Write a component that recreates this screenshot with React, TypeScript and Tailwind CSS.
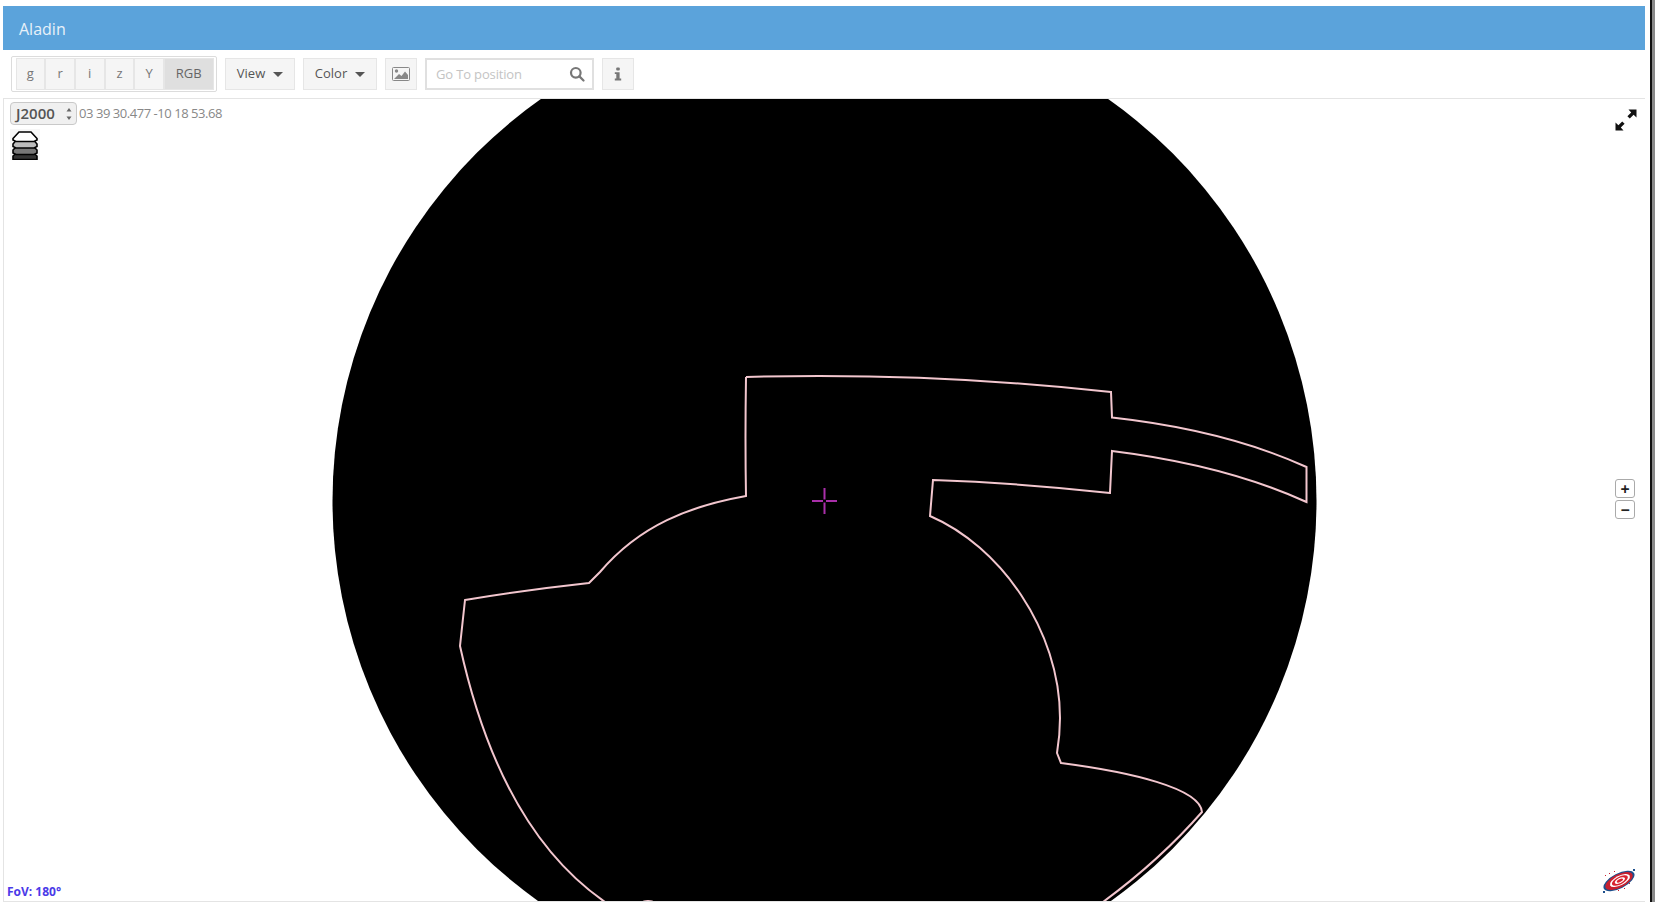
import React from "react";

const font = { fontFamily: '"Open Sans", sans-serif' };

const bands = ["g", "r", "i", "z", "Y"];

const ToolButton = ({ className, children }: { className: string; children: React.ReactNode }) => (
  <div className={`flex h-[32px] items-center justify-center border border-[#e6e6e6] bg-[#f5f5f5] text-[13px] text-[#555] ${className}`}>
    {children}
  </div>
);

const Caret = () => <span className="ml-[8px] h-0 w-0 border-x-[5px] border-t-[5px] border-x-transparent border-t-[#555]" />;

const Sky = () => (
  <svg className="absolute left-[-4px] top-[-99px]" width="1655" height="902" viewBox="0 0 1655 902">
    <circle cx="824.5" cy="501" r="492" fill="#000" />
    <path
      d="M746 377Q930 372 1111 392L1112 417.5Q1225 430 1306.5 467L1306.5 502Q1225 465 1112 451L1110 493Q1020 483 933 480L930 516C1000 546 1060 630 1060 718Q1060 735 1057 753L1061 763C1130 772 1200 788 1202 812Q1160 860 1103 902M605 902C530 850 485 760 460 646L465 600Q525 590 589 583L600 572C640 525 690 506 746 496Q745 440 746 377"
      fill="none"
      stroke="#f2c6ce"
      strokeWidth="2"
    />
    <ellipse cx="648" cy="902" rx="6" ry="2" fill="#f2c6ce" />
    <path d="M812 501H823M826 501H837M824.5 488V499.5M824.5 502.5V514" stroke="#a92fa9" strokeWidth="2" />
  </svg>
);

const StackIcon = () => (
  <svg width="30" height="31" viewBox="0 0 30 31" className="bg-[#f7f7f7]">
    <path d="M3 27L6 24.5H24L27 27V30.5H3Z" fill="#333" stroke="#000" strokeWidth="1.6" />
    <path d="M3 21L6 18H24L27 21V24L24 25.5H6L3 24Z" fill="#777" stroke="#000" strokeWidth="1.6" />
    <path d="M3 15L6 11.5H24L27 15V17.5L24 19H6L3 17.5Z" fill="#bbb" stroke="#000" strokeWidth="1.6" />
    <path d="M3 9.5L9 3H21L27 9.5V11L24 12.5H6L3 11Z" fill="#fff" stroke="#000" strokeWidth="1.6" />
  </svg>
);

const GalaxyLogo = () => (
  <svg width="34" height="26" viewBox="0 0 34 26">
    <g transform="rotate(-27 17 13)">
      <ellipse cx="17" cy="13" rx="17" ry="7.5" fill="#1d4f8c" />
      <ellipse cx="17" cy="13" rx="15" ry="6.6" fill="#c8202f" />
      <ellipse cx="18" cy="13" rx="11" ry="4.8" fill="#fff" />
      <ellipse cx="18" cy="13" rx="8.8" ry="3.8" fill="#d8232f" />
      <ellipse cx="18" cy="13" rx="5.6" ry="2.5" fill="#fff" />
      <ellipse cx="18" cy="13" rx="3.4" ry="1.4" fill="#d8232f" />
    </g>
    <g fill="#c8202f">
      <rect x="3" y="7" width="1" height="1" />
      <rect x="7" y="5" width="1" height="1" />
      <rect x="12" y="3" width="1" height="1" />
      <rect x="27" y="15" width="1" height="1" />
      <rect x="22" y="20" width="1" height="1" />
      <rect x="16" y="22" width="1" height="1" />
    </g>
    <rect x="31" y="1" width="2" height="2" fill="#1d4f8c" />
    <rect x="1" y="23" width="2" height="2" fill="#1d4f8c" />
  </svg>
);

export default function App() {
  return (
    <div className="relative h-[902px] w-[1655px] overflow-hidden bg-white" style={font}>
      <div className="flex h-[902px] w-[1650px] flex-col pl-[3px] pr-[5px] pt-[6px]">
        <div className="flex h-[44px] shrink-0 items-center bg-[#5ba3db] pl-[16px] pt-[2px] text-[16px] text-[#e8f1f9]">Aladin</div>

        <div className="flex h-[48px] shrink-0 items-center pl-[8px]">
          <div className="flex h-[36px] w-[206px] items-center rounded-[2px] border border-[#dcdcdc] pl-[3.5px] pr-[2.5px]">
            {bands.map((b) => (
              <ToolButton key={b} className="w-[30px] text-[#777]">{b}</ToolButton>
            ))}
            <ToolButton className="w-[50px] !bg-[#dfdfdf] text-[#666]">RGB</ToolButton>
          </div>
          <ToolButton className="ml-[8px] w-[70px]">View<Caret /></ToolButton>
          <ToolButton className="ml-[8px] w-[74px]">Color<Caret /></ToolButton>
          <ToolButton className="ml-[8px] w-[32px]">
            <svg width="18" height="14" viewBox="0 0 18 14">
              <rect x="0.5" y="0.5" width="17" height="13" rx="1" fill="#f5f5f5" stroke="#888" />
              <circle cx="4.5" cy="4" r="1.7" fill="#888" />
              <path d="M2 12L7 7L9.5 9L13 4.5L16 8V12Z" fill="#888" />
            </svg>
          </ToolButton>
          <div className="ml-[8px] flex h-[32px] w-[169px] items-center justify-between border-2 border-[#e0e0e0] pl-[9px] pr-[7px] text-[13px] text-[#c4c4c4]">
            <span className="pt-[1px] tracking-[-0.15px]">Go To position</span>
            <svg width="16" height="16" viewBox="0 0 16 16" fill="none" stroke="#777" strokeWidth="2.2">
              <circle cx="6.8" cy="6.8" r="4.8" />
              <path d="M10.4 10.4L14.5 14.5" strokeLinecap="round" />
            </svg>
          </div>
          <ToolButton className="ml-[8px] w-[32px]">
            <svg width="8" height="14" viewBox="0 0 8 14" fill="#777">
              <rect x="2.2" y="0.5" width="3.6" height="3" rx="1" />
              <path d="M0.8 5.2H5.6V11.6H7.2V13.5H0.8V11.6H2.3V7.1H0.8Z" />
            </svg>
          </ToolButton>
        </div>

        <div className="relative flex-1 overflow-hidden border-l border-t border-[#e4e4e4]">
          <Sky />
          <div className="absolute left-[6px] top-[3px] flex items-center">
            <div className="flex h-[23px] w-[67px] items-center justify-between rounded-[4px] border border-[#c9c9c9] bg-[#f0f0f0] pl-[5px] pr-[3px] text-[15px] font-semibold text-[#555]">
              <span>J2000</span>
              <svg width="8" height="14" viewBox="0 0 8 14" fill="#666">
                <path d="M4 1L6.5 4.5H1.5ZM4 13L1.5 9.5H6.5Z" />
              </svg>
            </div>
            <span className="ml-[2px] pt-[1px] text-[13px] tracking-[-0.45px] text-[#888]">03 39 30.477 -10 18 53.68</span>
          </div>
          <div className="absolute left-[6px] top-[30px]"><StackIcon /></div>
          <svg className="absolute left-[1611px] top-[10px]" width="22" height="22" viewBox="0 0 22 22" fill="#111">
            <path d="M21.5 0.5V8.5L18.6 5.8L14.8 9.6L12.4 7.2L16.2 3.4L13.5 0.5Z" />
            <path d="M0.5 21.5V13.5L3.4 16.2L7.2 12.4L9.6 14.8L5.8 18.6L8.5 21.5Z" />
          </svg>
          <div className="absolute left-[1611px] top-[380px] flex flex-col gap-[2px]">
            <div className="flex h-[19px] w-[20px] items-center justify-center rounded-[3px] border border-[#aaa] bg-white text-[16px] font-bold leading-none text-[#222]">+</div>
            <div className="flex h-[19px] w-[20px] items-center justify-center rounded-[3px] border border-[#aaa] bg-white text-[16px] font-bold leading-none text-[#222]">−</div>
          </div>
          <div className="absolute bottom-[3px] left-[3px] text-[12px] font-bold leading-none text-[#4a3ae8]">FoV: 180°</div>
          <div className="absolute left-[1598px] top-[769px]"><GalaxyLogo /></div>
        </div>
        <div className="h-[1px] shrink-0 border-t border-[#e4e4e4]" />
      </div>
      <div className="absolute bottom-0 right-0 top-0 w-[5px] border-l-2 border-[#111] bg-[#8a8a8a]" />
    </div>
  );
}
